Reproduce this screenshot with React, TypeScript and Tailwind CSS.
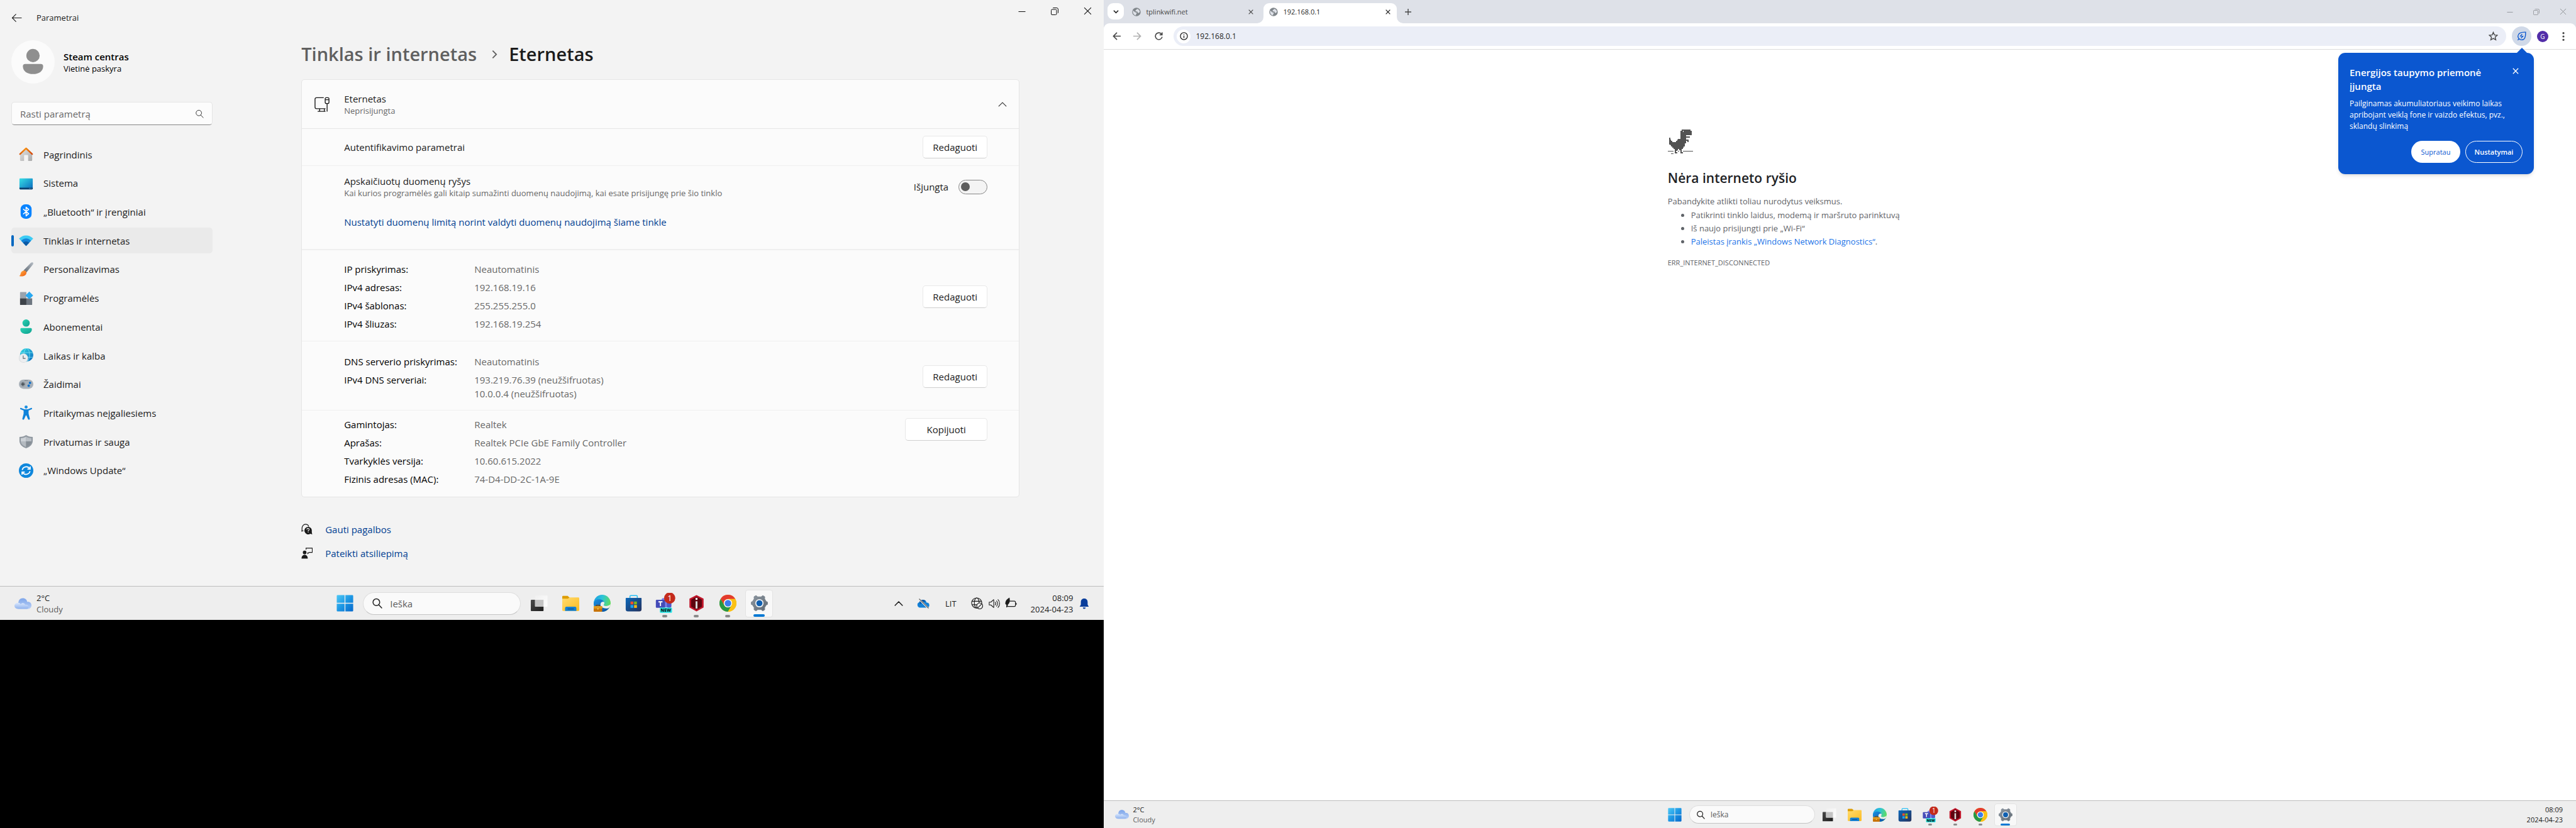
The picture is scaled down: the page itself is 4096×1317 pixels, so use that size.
import type { ReactNode } from "react";

type IconProps = { className?: string };

/* ---------- Settings navigation icons ---------- */

const HomeIcon = ({ className }: IconProps) => (
  <svg viewBox="0 0 25 25" className={className} aria-hidden="true">
    <defs>
      <linearGradient id="homeWall" x1="0" y1="0" x2="1" y2="1">
        <stop offset="0" stopColor="#e4e4e4" />
        <stop offset="1" stopColor="#a9a9a9" />
      </linearGradient>
      <linearGradient id="homeRoof" gradientUnits="userSpaceOnUse" x1="1" y1="0" x2="24" y2="0">
        <stop offset="0" stopColor="#d9580a" />
        <stop offset="0.450" stopColor="#f59015" />
        <stop offset="1" stopColor="#d23f06" />
      </linearGradient>
    </defs>
    <path d="M2 10 12.500 2.500 23 10V22.500a1.500 1.500 0 0 1-1.500 1.500H16V14.500a1 1 0 0 0-1-1H10a1 1 0 0 0-1 1V24H3.500A1.500 1.500 0 0 1 2 22.500Z" fill="url(#homeWall)" />
    <path d="M2 12 12.500 2.200 23 12" fill="none" stroke="url(#homeRoof)" strokeWidth="2.700" strokeLinecap="round" strokeLinejoin="round" />
  </svg>
);

const SystemIcon = ({ className }: IconProps) => (
  <svg viewBox="0 0 25 25" className={className} aria-hidden="true">
    <defs>
      <linearGradient id="sysScreen" x1="0" y1="0" x2="1" y2="1">
        <stop offset="0" stopColor="#36dfe6" />
        <stop offset="1" stopColor="#0a68bd" />
      </linearGradient>
    </defs>
    <rect x="1" y="4" width="23" height="19" rx="1.200" fill="url(#sysScreen)" />
    <path d="M1 20H24v1.800A1.200 1.200 0 0 1 22.800 23H2.200A1.200 1.200 0 0 1 1 21.800Z" fill="#0b3f6e" />
    <circle cx="18.500" cy="21.500" r="0.600" fill="#8fd8ef" />
    <circle cx="21" cy="21.500" r="0.600" fill="#8fd8ef" />
  </svg>
);

const BluetoothIcon = ({ className }: IconProps) => (
  <svg viewBox="0 0 25 25" className={className} aria-hidden="true">
    <rect x="3" y="0" width="19" height="25" rx="8" fill="#0a84ff" />
    <path d="M8 8.500 17 16.200 12.500 20V5L17 8.800 8 16.500" fill="none" stroke="#fff" strokeWidth="1.700" strokeLinejoin="round" strokeLinecap="round" />
  </svg>
);

const WifiIcon = ({ className }: IconProps) => (
  <svg viewBox="0 0 25 25" className={className} aria-hidden="true">
    <path d="M12.500 22 0.300 9.300C3.500 5.600 7.800 3.700 12.500 3.700S21.500 5.600 24.700 9.300Z" fill="#3ccbf4" />
    <path d="M12.500 22 4 13.100C6.300 10.600 9.200 9.100 12.500 9.100S18.700 10.600 21 13.100Z" fill="#1382d8" />
    <path d="M12.500 22 7.200 16.500C8.700 14.900 10.500 14 12.500 14S16.300 14.900 17.800 16.500Z" fill="#0c59a4" />
  </svg>
);

const BrushIcon = ({ className }: IconProps) => (
  <svg viewBox="0 0 25 25" className={className} aria-hidden="true">
    <defs>
      <linearGradient id="brushHandle" x1="0" y1="1" x2="1" y2="0">
        <stop offset="0" stopColor="#5c6670" />
        <stop offset="1" stopColor="#b7bec6" />
      </linearGradient>
      <linearGradient id="brushTip" x1="0" y1="0" x2="1" y2="1">
        <stop offset="0" stopColor="#ffb44a" />
        <stop offset="1" stopColor="#ef5a0c" />
      </linearGradient>
    </defs>
    <path d="M8 14.500 20.500 1.300C21.700 0.200 23.600 0 24.500 0.700 25.200 1.600 25 3 24.200 4.200L12.500 18.500Z" fill="url(#brushHandle)" />
    <path d="M7.700 14.600c2.800-1.200 6 1.200 5.300 4.700-.9 4.300-6.500 6.300-12.500 4.700 2-.8 2-2.200 2.700-4.900.6-2.300 2.200-3.700 4.500-4.500Z" fill="url(#brushTip)" />
  </svg>
);

const AppsIcon = ({ className }: IconProps) => (
  <svg viewBox="0 0 25 25" className={className} aria-hidden="true">
    <path d="M3 1.500H13V12.500H2V2.500a1 1 0 0 1 1-1Z" fill="#9aa3ad" />
    <path d="M2 12.500H13V24H3a1 1 0 0 1-1-1Z" fill="#3d4349" />
    <path d="M13 12.500H23V23a1 1 0 0 1-1 1H13Z" fill="#6e7781" />
    <path d="M18 0.800 24.700 7.500 18 14.200 11.300 7.500Z" fill="#28a8f0" />
  </svg>
);

const AccountsIcon = ({ className }: IconProps) => (
  <svg viewBox="0 0 25 25" className={className} aria-hidden="true">
    <defs>
      <linearGradient id="acct" x1="0" y1="0" x2="1" y2="1">
        <stop offset="0" stopColor="#2bd4b4" />
        <stop offset="1" stopColor="#0f9f8f" />
      </linearGradient>
    </defs>
    <circle cx="12.500" cy="6.300" r="6.300" fill="url(#acct)" />
    <path d="M4.500 15H20.500A2 2 0 0 1 22.500 17C22.500 21.500 18.500 25 12.500 25S2.500 21.500 2.500 17A2 2 0 0 1 4.500 15Z" fill="url(#acct)" />
  </svg>
);

const TimeIcon = ({ className }: IconProps) => (
  <svg viewBox="0 0 25 25" className={className} aria-hidden="true">
    <defs>
      <linearGradient id="timeGlobe" x1="0" y1="0" x2="1" y2="1">
        <stop offset="0" stopColor="#35dbe2" />
        <stop offset="1" stopColor="#0a66c0" />
      </linearGradient>
    </defs>
    <circle cx="13.500" cy="11.500" r="11.500" fill="url(#timeGlobe)" />
    <g fill="none" stroke="#7fe6f2" strokeWidth="0.900">
      <ellipse cx="13.500" cy="11.500" rx="5" ry="11.300" />
      <path d="M3 7.500H24M3 15.500H24" />
    </g>
    <circle cx="8" cy="17" r="8" fill="#d3d7da" />
    <circle cx="8" cy="17" r="7.200" fill="#eceef0" />
    <path d="M7.500 12.500V17.500H11.500" fill="none" stroke="#5c6670" strokeWidth="1.200" />
  </svg>
);

const GamepadIcon = ({ className }: IconProps) => (
  <svg viewBox="0 0 25 25" className={className} aria-hidden="true">
    <rect x="0" y="4" width="25" height="16" rx="8" fill="#a9b1b9" />
    <circle cx="7" cy="12" r="4.300" fill="#929ba3" />
    <path d="M7 9V15M4 12H10" stroke="#3f464d" strokeWidth="1.500" />
    <circle cx="19.200" cy="9.700" r="2.100" fill="#0b6fcb" />
    <circle cx="17" cy="14.700" r="2.100" fill="#0b6fcb" />
    <circle cx="11" cy="5.800" r="0.700" fill="#3f464d" />
    <circle cx="14" cy="5.800" r="0.700" fill="#3f464d" />
  </svg>
);

const AccessIcon = ({ className }: IconProps) => (
  <svg viewBox="0 0 25 25" className={className} aria-hidden="true">
    <circle cx="12.500" cy="2.700" r="2.700" fill="#1a8fe0" />
    <path d="M3.500 4.200 9.500 6.400H15.500L21.500 4.200C23 4 23.300 6 22 6.600L16.800 8.800V14L19 22.700C19 24.600 17 25.200 16 23.800L13 17H12L9 23.800C8 25.200 6 24.600 6 22.700L8.200 14V8.800L3 6.600C1.700 6 2 4 3.500 4.200Z" fill="#0f83da" />
  </svg>
);

const ShieldIcon = ({ className }: IconProps) => (
  <svg viewBox="0 0 25 25" className={className} aria-hidden="true">
    <path d="M12.500 1C15.500 3 19.500 4.200 24 4.300V11C24 17 20 21.500 12.500 24 5 21.500 1 17 1 11V4.300C5.500 4.200 9.500 3 12.500 1Z" fill="#9098a0" />
    <path d="M12.500 3.700C9.700 5.300 7 6.200 3.300 6.500V12H12.500Z" fill="#ccd1d6" />
    <path d="M12.500 3.700C15.300 5.300 18 6.200 21.700 6.500V12H12.500Z" fill="#b9bfc5" />
    <path d="M3.300 12H12.500V21.700C7 19.600 3.600 16.500 3.300 12Z" fill="#b4bac0" />
    <path d="M21.700 12H12.500V21.700C18 19.600 21.400 16.500 21.700 12Z" fill="#868e96" />
  </svg>
);

const UpdateIcon = ({ className }: IconProps) => (
  <svg viewBox="0 0 25 25" className={className} aria-hidden="true">
    <circle cx="12.500" cy="12.500" r="12.500" fill="#0f87dc" />
    <g fill="none" stroke="#fff" strokeWidth="1.900">
      <path d="M5.800 11.500A7 7 0 0 1 18.600 9.200" />
      <path d="M19.200 13.500A7 7 0 0 1 6.400 15.800" />
      <path d="M19.500 5.300V10H14.800" />
      <path d="M5.500 19.700V15H10.200" />
    </g>
  </svg>
);

/* ---------- Small line icons ---------- */

const MagnifierIcon = ({ className }: IconProps) => (
  <svg viewBox="0 0 16 16" className={className} fill="none" stroke="currentColor" aria-hidden="true">
    <circle cx="7" cy="6.500" r="5" />
    <path d="M10.600 10.300 15 15" strokeLinecap="round" />
  </svg>
);

const MinimizeIcon = ({ className }: IconProps) => (
  <svg viewBox="0 0 12 12" className={className} fill="none" stroke="currentColor" aria-hidden="true">
    <path d="M0.500 6.500H11.500" />
  </svg>
);

const RestoreIcon = ({ className }: IconProps) => (
  <svg viewBox="0 0 12 12" className={className} fill="none" stroke="currentColor" aria-hidden="true">
    <rect x="0.500" y="3" width="8.500" height="8.500" rx="1.500" />
    <path d="M3 1C3.300 0.600 3.600 0.500 4 0.500H9A2.500 2.500 0 0 1 11.500 3V8C11.500 8.400 11.400 8.700 11 9" />
  </svg>
);

const CrossIcon = ({ className }: IconProps) => (
  <svg viewBox="0 0 12 12" className={className} fill="none" stroke="currentColor" aria-hidden="true">
    <path d="M1 1 11 11M11 1 1 11" />
  </svg>
);

const EthernetIcon = ({ className }: IconProps) => (
  <svg viewBox="0 0 26 26" className={className} fill="none" stroke="currentColor" strokeWidth="1.500" aria-hidden="true">
    <path d="M16 1.500H3.500A2.500 2.500 0 0 0 1 4V18A2.500 2.500 0 0 0 3.500 20.500H19" />
    <path d="M9 20.500V25M17 20.500V25M5.500 25H19" />
    <rect x="18.500" y="1.500" width="6.500" height="10" rx="2" />
    <path d="M18.500 5H25M21.800 11.500V25.500" />
  </svg>
);

const HelpIcon = ({ className }: IconProps) => (
  <svg viewBox="0 0 20 20" className={className} aria-hidden="true">
    <path d="M1 14C1.500 12.500 1.500 11 1.300 8.500 1.300 4 4 1 7.500 1 10.500 1 12.500 2.500 13.200 5" fill="none" stroke="#1a1a1a" strokeWidth="1.300" />
    <path d="M0.500 12.500H4" stroke="#1a1a1a" strokeWidth="1.200" />
    <path d="M12 5.500C15.800 5.500 18.700 8.400 18.700 12 18.700 13.500 18.300 14.800 19.500 19L16 17.800A6.700 6.700 0 1 1 12 5.500Z" fill="#1a1a1a" />
    <path d="M10 10.500A2 2 0 1 1 12.300 12.200V13.200M12.300 14.300V15.500" fill="none" stroke="#f3f3f3" strokeWidth="1.300" />
  </svg>
);

const FeedbackIcon = ({ className }: IconProps) => (
  <svg viewBox="0 0 20 20" className={className} aria-hidden="true">
    <circle cx="6" cy="8.500" r="3.200" fill="#1a1a1a" />
    <path d="M0.500 19.500C0.500 15.500 2.500 12.800 6 12.800S11.500 15.500 11.500 19.500Z" fill="#1a1a1a" />
    <path d="M8.500 3.500V1H19.500V8.500H14L11.500 10.500V8.500" fill="none" stroke="#1a1a1a" strokeWidth="1.300" />
  </svg>
);

const GlobeSolidIcon = ({ className }: IconProps) => (
  <svg viewBox="0 0 16 16" className={className} aria-hidden="true">
    <circle cx="8" cy="8" r="7.700" fill="#80868b" />
    <path d="M2.200 5.500 5.500 8.500 8 9C9 9.500 8.500 11 7.500 11.500L7 14.200C4 13.800 1.800 11.500 1.700 8.500 1.700 7.300 1.800 6.500 2.200 5.500Z" fill="#dee1e8" />
    <path d="M6.500 4.500C7.500 4.500 8.500 4 9 2.200 12 3 14 5 14.200 8L12 10 10.500 9.500 9.500 7.200H6.500Z" fill="#dee1e8" />
  </svg>
);

/* ---------- Taskbar icons ---------- */

const StartIcon = ({ className }: IconProps) => (
  <svg viewBox="0 0 30 30" className={className} aria-hidden="true">
    <defs>
      <linearGradient id="startBlue" gradientUnits="userSpaceOnUse" x1="0" y1="0" x2="30" y2="30">
        <stop offset="0" stopColor="#4fcaf6" />
        <stop offset="0.500" stopColor="#1d97e4" />
        <stop offset="1" stopColor="#0667cb" />
      </linearGradient>
    </defs>
    <path d="M2 0.500H14.300V14.300H0.500V2A1.500 1.500 0 0 1 2 0.500ZM15.700 0.500H28A1.500 1.500 0 0 1 29.500 2V14.300H15.700ZM0.500 15.700H14.300V29.500H2A1.500 1.500 0 0 1 0.500 28ZM15.700 15.700H29.500V28A1.500 1.500 0 0 1 28 29.500H15.700Z" fill="url(#startBlue)" />
  </svg>
);

const TaskViewIcon = ({ className }: IconProps) => (
  <svg viewBox="0 0 30 30" className={className} aria-hidden="true">
    <defs>
      <linearGradient id="tvDark" x1="0" y1="0" x2="1" y2="1">
        <stop offset="0" stopColor="#4a4a4a" />
        <stop offset="1" stopColor="#1c1c1c" />
      </linearGradient>
      <linearGradient id="tvLight" x1="0" y1="0" x2="1" y2="1">
        <stop offset="0" stopColor="#f0f0f0" />
        <stop offset="1" stopColor="#fdfdfd" />
      </linearGradient>
    </defs>
    <rect x="0" y="9" width="22.500" height="20" rx="1.200" fill="url(#tvDark)" />
    <rect x="7.500" y="1" width="22" height="20" rx="1" fill="url(#tvLight)" />
    <rect x="7.500" y="9" width="15" height="12" fill="#c3c3c3" />
  </svg>
);

const ExplorerIcon = ({ className }: IconProps) => (
  <svg viewBox="0 0 30 30" className={className} aria-hidden="true">
    <defs>
      <linearGradient id="folder" x1="0" y1="0" x2="1" y2="1">
        <stop offset="0" stopColor="#ffdb6e" />
        <stop offset="1" stopColor="#fcbc22" />
      </linearGradient>
    </defs>
    <path d="M0 3.500A1.500 1.500 0 0 1 1.500 2H9.500L13 5V10H0Z" fill="#dd9d05" />
    <path d="M0 7H10L13 4.800H28.500A1.500 1.500 0 0 1 30 6.300V27A1.500 1.500 0 0 1 28.500 28.500H1.500A1.500 1.500 0 0 1 0 27Z" fill="url(#folder)" />
    <path d="M5 28.500V23.500A2.500 2.500 0 0 1 7.500 21H22.500A2.500 2.500 0 0 1 25 23.500V28.500Z" fill="#1480d2" />
    <path d="M10 25.200H20" stroke="#0b4f8c" strokeWidth="1.400" strokeLinecap="round" />
  </svg>
);

const EdgeIcon = ({ className }: IconProps) => (
  <svg viewBox="0 0 30 30" className={className} aria-hidden="true">
    <defs>
      <linearGradient id="edgeTop" x1="0" y1="0.200" x2="1" y2="0.500">
        <stop offset="0" stopColor="#1d9fe0" />
        <stop offset="0.450" stopColor="#2cc3d8" />
        <stop offset="1" stopColor="#62de5b" />
      </linearGradient>
      <linearGradient id="edgeLow" x1="0" y1="0" x2="1" y2="1">
        <stop offset="0" stopColor="#1a8fe0" />
        <stop offset="1" stopColor="#0c4ea3" />
      </linearGradient>
    </defs>
    <circle cx="15" cy="15" r="15" fill="url(#edgeTop)" />
    <path d="M0 15C1 10 5 8 9.500 8 14 8 17.500 10 18.500 13 15 11.500 12 13.500 12 17 12 21 16 24 20.500 24 23.500 24 25.500 23 27.500 22.500 25 27 20.500 30 15 30 6.700 30 0 23.300 0 15Z" fill="url(#edgeLow)" />
    <path d="M18.500 13C19.300 15 18.600 16.500 17.700 17.700 17 18.700 18.500 20 22 20 26.500 20 29 18 29.900 16.500 29.700 19 29 21 27.500 22.500 25.500 24 23.500 24.500 20.500 24 15.500 23.500 12 20.500 12 17 12 13.500 15.500 11.500 18.500 13Z" fill="#ededed" />
    <rect x="0" y="20" width="15" height="10" rx="1.200" fill="#c87409" />
    <path d="M0 21.200A1.200 1.200 0 0 1 1.200 20H13.800A1.200 1.200 0 0 1 15 21.200V24.500H0Z" fill="#e19a1c" />
    <path d="M4.500 20V18.500H10.500V20" fill="none" stroke="#7a4304" strokeWidth="1.300" />
    <circle cx="7.500" cy="25" r="1.100" fill="#ffd35c" />
  </svg>
);

const StoreIcon = ({ className }: IconProps) => (
  <svg viewBox="0 0 30 30" className={className} aria-hidden="true">
    <defs>
      <linearGradient id="storeBag" x1="0" y1="0" x2="1" y2="1">
        <stop offset="0" stopColor="#0c69bb" />
        <stop offset="1" stopColor="#23305c" />
      </linearGradient>
    </defs>
    <path d="M8.500 6V3A1.500 1.500 0 0 1 10 1.500H20A1.500 1.500 0 0 1 21.500 3V6" fill="none" stroke="#27c0f5" strokeWidth="1.700" />
    <path d="M2 5.500H28A1 1 0 0 1 29 6.500V25.500A4 4 0 0 1 25 29.500H5A4 4 0 0 1 1 25.500V6.500A1 1 0 0 1 2 5.500Z" fill="url(#storeBag)" />
    <path d="M9.500 12H14.500V17H9.500Z" fill="#f0502a" />
    <path d="M15.800 12H20.800V17H15.800Z" fill="#80ba18" />
    <path d="M9.500 18.200H14.500V23.200H9.500Z" fill="#1ba3ee" />
    <path d="M15.800 18.200H20.800V23.200H15.800Z" fill="#fdb913" />
  </svg>
);

const TeamsIcon = ({ className }: IconProps) => (
  <svg viewBox="0 0 36 36" className={className} aria-hidden="true">
    <rect x="12" y="9" width="16" height="16" rx="3" fill="#7b83eb" />
    <rect x="21" y="14" width="8" height="12" rx="3" fill="#5059c9" />
    <rect x="2" y="12" width="16" height="14" rx="1.500" fill="#444bb8" />
    <path d="M6.500 15.500H13.500M10 15.500V23" stroke="#fff" strokeWidth="2" />
    <rect x="9" y="25.500" width="21" height="9" rx="1.500" fill="#28e3e3" />
    <text x="19.500" y="32.700" textAnchor="middle" fontFamily="Open Sans, sans-serif" fontWeight="800" fontSize="7.500" fill="#0b1b1b">NEW</text>
    <circle cx="26" cy="9" r="9.700" fill="#c42b1c" />
    <text x="26" y="14" textAnchor="middle" fontFamily="Open Sans, sans-serif" fontSize="14" fill="#fff">1</text>
  </svg>
);

const RedGemIcon = ({ className }: IconProps) => (
  <svg viewBox="0 0 30 30" className={className} aria-hidden="true">
    <path d="M15 0.500 27.500 7V22.500L15 29.500 2.500 22.500V7Z" fill="#c0152a" />
    <path d="M15 3.500 24.500 8.700V21L15 26.500 5.500 21V8.700Z" fill="#5e0410" />
    <path d="M13.300 11.500H16.700V24.500H13.300Z" fill="#d9d9d9" />
    <path d="M13.300 5.500H16.700V9H13.300Z" fill="#fff" />
  </svg>
);

const ChromeIcon = ({ className }: IconProps) => (
  <svg viewBox="0 0 30 30" className={className} aria-hidden="true">
    <circle cx="15" cy="15" r="15" fill="#fbc116" />
    <path d="M2 7.500A15 15 0 0 1 28 7.500H15A7.500 7.500 0 0 0 8.500 18.700Z" fill="#e33b2e" />
    <path d="M2 7.500 8.500 18.700A7.500 7.500 0 0 0 15 22.500L21.500 18.700 15 30A15 15 0 0 1 2 7.500Z" fill="#269846" />
    <path d="M28 7.500A15 15 0 0 1 15 30L21.500 18.800A7.500 7.500 0 0 0 15 7.500Z" fill="#fbc116" />
    <circle cx="15" cy="15" r="7.300" fill="#fff" />
    <circle cx="15" cy="15" r="5.800" fill="#3b7ded" />
  </svg>
);

const GearIcon = ({ className }: IconProps) => (
  <svg viewBox="0 0 30 30" className={className} aria-hidden="true">
    <defs>
      <linearGradient id="gearGrey" x1="0" y1="0" x2="1" y2="1">
        <stop offset="0" stopColor="#8f99a3" />
        <stop offset="1" stopColor="#5e6872" />
      </linearGradient>
    </defs>
    <g fill="url(#gearGrey)" stroke="#79838d" strokeLinejoin="round">
      <path d="M9 1.500 12 3.700H18L21 1.500 24.500 3.500 24.300 7.200 27 11.800 29.500 13V17L27 18.200 24.300 22.800 24.500 26.500 21 28.500 18 26.300H12L9 28.500 5.500 26.500 5.700 22.800 3 18.200 0.500 17V13L3 11.800 5.700 7.200 5.500 3.500Z" />
    </g>
    <circle cx="15" cy="15" r="7.300" fill="#f0f2f4" />
    <circle cx="15" cy="15" r="5.400" fill="#0f5fb0" />
  </svg>
);

const CloudyIcon = ({ className }: IconProps) => (
  <svg viewBox="0 0 30 20" className={className} aria-hidden="true">
    <defs>
      <linearGradient id="cloudBack" x1="0" y1="0" x2="0" y2="1">
        <stop offset="0" stopColor="#7ea6ea" />
        <stop offset="1" stopColor="#b9d0f7" />
      </linearGradient>
      <linearGradient id="cloudFront" x1="0" y1="0" x2="0" y2="1">
        <stop offset="0" stopColor="#dbe8fc" />
        <stop offset="1" stopColor="#8fb2ee" />
      </linearGradient>
    </defs>
    <path d="M7 12C6 5 9.500 0.500 14.500 0.500S22 3.500 22.500 7C27 6 30 9 30 13S27 19.500 24 19.500H7Z" fill="url(#cloudBack)" />
    <path d="M6 19.500C2.500 19.500 0 17 0 14S2.500 8.500 6 8.500C8.500 8.500 10 9.500 11 11 13 8.500 17.500 8.500 19 12 23 11.500 25 13.500 25 16S23 19.500 20.500 19.500Z" fill="url(#cloudFront)" />
  </svg>
);

const TrayCloudIcon = ({ className }: IconProps) => (
  <svg viewBox="0 0 20 16" className={className} aria-hidden="true">
    <path d="M5 14.500A4.500 4.500 0 0 1 4 5.700 6 6 0 0 1 15.300 6.500 4 4 0 0 1 16 14.500Z" fill="#1380d6" />
    <path d="M4 5.700A6 6 0 0 1 14 4L5 9Z" fill="#0a56a6" />
    <path d="M3 0.500 18 15.500" stroke="#ededed" strokeWidth="2.600" />
    <path d="M3.500 0.500 18.500 15.500" stroke="#5b5b5b" strokeWidth="1.100" />
  </svg>
);

const TrayGlobeIcon = ({ className }: IconProps) => (
  <svg viewBox="0 0 20 20" className={className} fill="none" stroke="#1c1c1c" strokeWidth="1.200" aria-hidden="true">
    <circle cx="9.500" cy="9.500" r="8.500" />
    <ellipse cx="9.500" cy="9.500" rx="4" ry="8.500" />
    <path d="M1.500 6.700H17.500M1.500 12.500H17.500" />
    <circle cx="14.500" cy="14.500" r="5" fill="#ededed" />
    <path d="M11.200 17.800 17.800 11.200" />
  </svg>
);

const TraySpeakerIcon = ({ className }: IconProps) => (
  <svg viewBox="0 0 20 20" className={className} fill="none" stroke="#1c1c1c" strokeWidth="1.200" strokeLinecap="round" strokeLinejoin="round" aria-hidden="true">
    <path d="M1 7.500V12.500H4L9 17V3L4 7.500Z" />
    <path d="M11.500 7.500A4 4 0 0 1 11.500 12.500M14 5.300A7 7 0 0 1 14 14.700M16.500 3A10 10 0 0 1 16.500 17" />
  </svg>
);

const TrayBatteryIcon = ({ className }: IconProps) => (
  <svg viewBox="0 0 20 20" className={className} aria-hidden="true">
    <rect x="3.500" y="6.500" width="14" height="9" rx="2" fill="none" stroke="#1c1c1c" strokeWidth="1.300" />
    <path d="M18.300 9.500H19.500V12.500H18.300Z" fill="#1c1c1c" />
    <path d="M0.500 11C0.500 6 3 3 7.500 0.500 8.500 5 8.500 9.500 5 12L3.500 17 2 16.500 2.500 13Z" fill="#1c1c1c" />
  </svg>
);

const BellIcon = ({ className }: IconProps) => (
  <svg viewBox="0 0 20 20" className={className} aria-hidden="true">
    <path d="M10 1C14 1 16 4 16 7.500V12L18 15.500H2L4 12V7.500C4 4 6 1 10 1ZM7.500 17H12.500A2.500 2.500 0 0 1 7.500 17Z" fill="#0a3e9b" />
  </svg>
);

const ChevronUpIcon = ({ className }: IconProps) => (
  <svg viewBox="0 0 12 12" className={className} fill="none" stroke="currentColor" aria-hidden="true">
    <path d="M1 8.500 6 3.500 11 8.500" strokeLinecap="round" strokeLinejoin="round" />
  </svg>
);

/* ---------- Dinosaur drawn on a 2px grid ---------- */

const DINO_ROWS = [
  "............########..",
  "...........##.#######.",
  "...........##########.",
  "...........##########.",
  "...........##########.",
  "...........#####......",
  "...........########...",
  ".#.........#####......",
  ".#.......#######......",
  ".##.....##########....",
  ".###...#########.#....",
  ".###############......",
  ".##############.......",
  "..#############.......",
  "...############.......",
  "....##########........",
  ".....########.........",
  "......###.##..........",
  "......##...#..........",
  "......#....#..........",
  "......##...##.........",
];

const DinoIcon = ({ className }: IconProps) => (
  <svg viewBox="0 0 44 43" className={className} shapeRendering="crispEdges" fill="#535353" aria-hidden="true">
    {DINO_ROWS.flatMap((row, y) =>
      Array.from(row.matchAll(/#+/g)).map((run) => (
        <rect key={`${y}-${run.index}`} x={run.index * 2} y={y * 2} width={run[0].length * 2} height="2" />
      )),
    )}
    <rect x="0" y="38" width="10" height="1" />
    <rect x="26" y="38" width="18" height="1" />
    <rect x="18" y="38" width="2" height="1" />
    <rect x="6" y="42" width="4" height="1" />
  </svg>
);

/* ---------- Settings window ---------- */

const NAV = [
  { label: "Pagrindinis", Icon: HomeIcon },
  { label: "Sistema", Icon: SystemIcon },
  { label: "„Bluetooth“ ir įrenginiai", Icon: BluetoothIcon },
  { label: "Tinklas ir internetas", Icon: WifiIcon, active: true },
  { label: "Personalizavimas", Icon: BrushIcon },
  { label: "Programėlės", Icon: AppsIcon },
  { label: "Abonementai", Icon: AccountsIcon },
  { label: "Laikas ir kalba", Icon: TimeIcon },
  { label: "Žaidimai", Icon: GamepadIcon },
  { label: "Pritaikymas neįgaliesiems", Icon: AccessIcon },
  { label: "Privatumas ir sauga", Icon: ShieldIcon },
  { label: "„Windows Update“", Icon: UpdateIcon },
];

const Sidebar = () => (
  <aside className="w-[345px] shrink-0 pl-[18px] pr-[7px] pt-2">
    <div className="flex items-center gap-[14px]">
      <svg viewBox="0 0 75 75" className="size-[69px]" aria-hidden="true">
        <circle cx="37.500" cy="37.500" r="37.500" fill="#fbfbfb" />
        <circle cx="37.500" cy="26.500" r="11.500" fill="#8f8f8f" />
        <path d="M24 41H51A4 4 0 0 1 55 45C55 53.500 47.500 58.500 37.500 58.500S20 53.500 20 45A4 4 0 0 1 24 41Z" fill="#8f8f8f" />
      </svg>
      <div className="text-black">
        <p className="text-[15px] leading-5 font-semibold">Steam centras</p>
        <p className="text-[13px] leading-[18px]">Vietinė paskyra</p>
      </div>
    </div>
    <div className="mt-[29px] flex h-[37px] items-center rounded-[5px] border border-[#e5e5e5] border-b-[#868686] bg-[#fcfcfc] px-[13px]">
      <input
        type="text"
        aria-label="Rasti parametrą"
        placeholder="Rasti parametrą"
        className="min-w-0 flex-1 bg-transparent text-[15px] leading-5 outline-none placeholder:text-[#686868]"
      />
      <MagnifierIcon className="size-[14px] text-[#1f1f1f]" />
    </div>
    <nav className="mt-[26px] flex h-[544px] flex-col justify-between">
      {NAV.map(({ label, Icon, active }) => (
        <a
          key={label}
          href="#"
          className={`relative flex h-[41px] items-center gap-4 rounded-[5px] pl-3 text-[15px] leading-5 text-[#1b1b1b] ${active ? "bg-[#eaeaea]" : ""}`}
        >
          {active && <span className="absolute left-0 h-[18px] w-1 rounded-full bg-[#0067c0]" />}
          <Icon className="size-[23px]" />
          {label}
        </a>
      ))}
    </nav>
  </aside>
);

const ActionButton = ({ children, className = "" }: { children: ReactNode; className?: string }) => (
  <button
    type="button"
    className={`h-9 shrink-0 rounded-[5px] border border-[#e8e8e8] border-b-[#cfcfcf] bg-white text-[15px] leading-5 text-[#1b1b1b] ${className}`}
  >
    {children}
  </button>
);

const Details = ({ items }: { items: [string, string[]][] }) => (
  <dl className="grid grid-cols-[207px_auto] text-[15px]">
    {items.map(([term, values]) => (
      <div key={term} className="contents">
        <dt className="leading-[29px] text-black">{term}</dt>
        <dd className="py-[3px] text-[#686868]">
          {values.map((v) => (
            <p key={v} className="leading-[22px]">{v}</p>
          ))}
        </dd>
      </div>
    ))}
  </dl>
);

const SettingsWindow = () => (
  <section className="bg-[#f3f3f3] pb-[33px]">
    <header className="flex h-14 items-start justify-between">
      <div className="flex h-14 items-center gap-[23px] pl-[18px]">
        <button type="button" aria-label="Atgal" className="grid size-[17px] place-items-center text-[#1b1b1b]">
          <svg viewBox="0 0 18 16" className="h-[15px] w-[17px]" fill="none" stroke="currentColor" strokeWidth="1.200" aria-hidden="true">
            <path d="M8 1.500 1.500 8 8 14.500M1.500 8H17.500" />
          </svg>
        </button>
        <p className="text-[13px] leading-[18px] text-[#1b1b1b]">Parametrai</p>
      </div>
      <div className="flex text-[#111]">
        <button type="button" aria-label="Sumažinti" className="grid h-[35px] w-[52px] place-items-center"><MinimizeIcon className="size-[12px]" /></button>
        <button type="button" aria-label="Atkurti" className="grid h-[35px] w-[52px] place-items-center"><RestoreIcon className="size-[12px]" /></button>
        <button type="button" aria-label="Uždaryti" className="grid h-[35px] w-[52px] place-items-center"><CrossIcon className="size-[13px]" /></button>
      </div>
    </header>
    <div className="flex">
      <Sidebar />
      <main className="min-w-0 flex-1 pt-[10px]">
        <div className="mx-auto max-w-[1142px]">
          <h1 className="flex items-center text-[29px] leading-10 font-semibold">
            <a href="#" className="text-[#5f5f5f]">Tinklas ir internetas</a>
            <svg viewBox="0 0 10 16" className="ml-6 mr-[18px] h-[15px] w-[9px]" fill="none" stroke="#5f5f5f" strokeWidth="2" aria-hidden="true">
              <path d="M1.500 1.500 8 8 1.500 14.500" />
            </svg>
            <span className="text-[#1b1b1b]">Eternetas</span>
          </h1>
          <div className="mt-5 rounded-[5px] border border-[#e5e5e5] bg-[#fbfbfb]">
            <div className="flex h-[78px] items-center border-b border-[#e5e5e5] pl-5 pr-[19px]">
              <EthernetIcon className="size-6 text-[#1b1b1b]" />
              <div className="ml-[23px] flex-1">
                <p className="text-[15px] leading-5 text-[#1b1b1b]">Eternetas</p>
                <p className="text-[13px] leading-[18px] text-[#686868]">Neprisijungta</p>
              </div>
              <button type="button" aria-label="Sutraukti"><ChevronUpIcon className="size-[14px] text-[#333]" /></button>
            </div>
            <div className="flex h-[59px] items-center justify-between border-b border-[#efefef] pl-[67px] pr-[50px]">
              <p className="text-[15px] leading-5 text-[#1b1b1b]">Autentifikavimo parametrai</p>
              <ActionButton className="w-[103px]">Redaguoti</ActionButton>
            </div>
            <div className="border-b-2 border-[#efefef] pb-[33px] pl-[67px] pr-[50px] pt-[14px]">
              <div className="flex items-center justify-between">
                <div>
                  <p className="text-[15px] leading-5 text-[#1b1b1b]">Apskaičiuotų duomenų ryšys</p>
                  <p className="text-[13px] leading-[18px] text-[#686868]">
                    Kai kurios programėlės gali kitaip sumažinti duomenų naudojimą, kai esate prisijungę prie šio tinklo
                  </p>
                </div>
                <label className="flex items-center gap-4 text-[15px] leading-5 text-[#1b1b1b]">
                  Išjungta
                  <input
                    type="checkbox"
                    role="switch"
                    className="flex h-[23px] w-[46px] appearance-none items-center rounded-full border border-[#868686] bg-[#f4f4f4] pl-[3px] before:size-[14px] before:rounded-full before:bg-[#5d5d5d] checked:bg-[#0067c0]"
                  />
                </label>
              </div>
              <a href="#" className="mt-[27px] block w-fit text-[15px] leading-5 text-[#003e92]">
                Nustatyti duomenų limitą norint valdyti duomenų naudojimą šiame tinkle
              </a>
            </div>
            <div className="flex items-start justify-between border-b border-[#efefef] pb-3 pl-[67px] pr-[50px] pt-4">
              <Details
                items={[
                  ["IP priskyrimas:", ["Neautomatinis"]],
                  ["IPv4 adresas:", ["192.168.19.16"]],
                  ["IPv4 šablonas:", ["255.255.255.0"]],
                  ["IPv4 šliuzas:", ["192.168.19.254"]],
                ]}
              />
              <ActionButton className="mt-10 w-[103px]">Redaguoti</ActionButton>
            </div>
            <div className="flex items-start justify-between border-b border-[#efefef] pb-3 pl-[67px] pr-[50px] pt-[18px]">
              <Details
                items={[
                  ["DNS serverio priskyrimas:", ["Neautomatinis"]],
                  ["IPv4 DNS serveriai:", ["193.219.76.39 (neužšifruotas)", "10.0.0.4 (neužšifruotas)"]],
                ]}
              />
              <ActionButton className="mt-5 w-[103px]">Redaguoti</ActionButton>
            </div>
            <div className="flex items-start justify-between pb-[13px] pl-[67px] pr-[50px] pt-2">
              <Details
                items={[
                  ["Gamintojas:", ["Realtek"]],
                  ["Aprašas:", ["Realtek PCIe GbE Family Controller"]],
                  ["Tvarkyklės versija:", ["10.60.615.2022"]],
                  ["Fizinis adresas (MAC):", ["74-D4-DD-2C-1A-9E"]],
                ]}
              />
              <ActionButton className="mt-1 w-[131px]">Kopijuoti</ActionButton>
            </div>
          </div>
          <div className="mt-8 text-[15px] text-[#003e92]">
            <a href="#" className="flex h-[38px] w-fit items-center gap-5"><HelpIcon className="size-[18px]" />Gauti pagalbos</a>
            <a href="#" className="flex h-[38px] w-fit items-center gap-5"><FeedbackIcon className="size-[18px]" />Pateikti atsiliepimą</a>
          </div>
        </div>
      </main>
    </div>
  </section>
);

/* ---------- Taskbar ---------- */

const APPS = [
  { name: "Užduočių rodinys", Icon: TaskViewIcon, running: false },
  { name: "Failų naršyklė", Icon: ExplorerIcon, running: false },
  { name: "Edge", Icon: EdgeIcon, running: false },
  { name: "Store", Icon: StoreIcon, running: false },
  { name: "Teams", Icon: TeamsIcon, running: true },
  { name: "Programa", Icon: RedGemIcon, running: true },
  { name: "Chrome", Icon: ChromeIcon, running: true },
];

const SIZES = {
  large: {
    bar: "h-[54px] text-[13px] leading-[18px]",
    side: "pl-[23px] gap-2",
    cloud: "w-[27px]",
    group: "gap-1",
    cell: "size-[50px]",
    icon: "size-[27px]",
    teams: "size-[33px]",
    search: "h-9 w-[251px] pl-[13px] text-[15px] gap-3",
    glass: "size-[17px]",
    dot: "h-1 w-2",
    tile: "h-11 w-11",
    activeDot: "h-1 w-[18px]",
    clock: "pr-[49px]",
  },
  small: {
    bar: "h-11 text-[11px] leading-4",
    side: "pl-[18px] gap-[6px]",
    cloud: "w-[22px]",
    group: "gap-[3px]",
    cell: "size-10",
    icon: "size-[22px]",
    teams: "size-[26px]",
    search: "h-[29px] w-[200px] pl-[10px] text-[12px] gap-[9px]",
    glass: "size-[14px]",
    dot: "h-[3px] w-[6px]",
    tile: "h-9 w-9",
    activeDot: "h-[3px] w-[15px]",
    clock: "pr-[21px]",
  },
};

const Taskbar = ({ size, tray }: { size: "large" | "small"; tray?: boolean }) => {
  const s = SIZES[size];
  return (
    <footer className={`grid grid-cols-[1fr_auto_1fr] items-center border-t border-[#bdbdbd] bg-[#eeeeee] text-[#1b1b1b] ${s.bar}`}>
      <button type="button" className={`flex items-center text-left ${s.side}`}>
        <CloudyIcon className={s.cloud} />
        <span>
          2°C
          <span className="block text-[#5c5c5c]">Cloudy</span>
        </span>
      </button>
      <div className={`flex items-center ${s.group}`}>
        <button type="button" aria-label="Pradžia" className={`grid place-items-center ${s.cell}`}>
          <StartIcon className={s.icon} />
        </button>
        <label className={`flex items-center rounded-full border border-[#dedede] border-b-[#c4c4c4] bg-[#fafafa] ${s.search}`}>
          <MagnifierIcon className={`shrink-0 stroke-[1.4] text-[#1f1f1f] ${s.glass}`} />
          <input type="text" placeholder="Ieška" aria-label="Ieška" className="w-full min-w-0 bg-transparent outline-none placeholder:text-[#5c5c5c]" />
        </label>
        <div className="flex items-center">
          {APPS.map(({ name, Icon, running }) => (
            <button key={name} type="button" aria-label={name} className={`relative grid place-items-center ${s.cell}`}>
              <Icon className={name === "Teams" ? s.teams : s.icon} />
              {running && <span className={`absolute bottom-[3px] rounded-full bg-[#8a8a8a] ${s.dot}`} />}
            </button>
          ))}
          <button type="button" aria-label="Parametrai" className={`grid place-items-center ${s.cell}`}>
            <span className={`relative grid place-items-center rounded-[4px] border border-[#e3e3e3] bg-[#f8f8f8] ${s.tile}`}>
              <GearIcon className={s.icon} />
              <span className={`absolute bottom-0 rounded-full bg-[#0078d4] ${s.activeDot}`} />
            </span>
          </button>
        </div>
      </div>
      <div className="flex items-center justify-end">
        {tray && (
          <div className="mr-[22px] flex items-center">
            <ChevronUpIcon className="mr-[22px] size-[14px] stroke-[1.3]" />
            <TrayCloudIcon className="mr-[25px] w-5" />
            <span className="mr-[23px]">LIT</span>
            <TrayGlobeIcon className="mr-[9px] size-[19px]" />
            <TraySpeakerIcon className="mr-[8px] size-[18px]" />
            <TrayBatteryIcon className="size-[19px]" />
          </div>
        )}
        <div className={`relative text-right ${s.clock}`}>
          <time className="block">08:09</time>
          <time className="block">2024-04-23</time>
          {tray && <BellIcon className="absolute right-[22px] top-[9px] size-[18px]" />}
        </div>
      </div>
    </footer>
  );
};

/* ---------- Browser window ---------- */

const SaverPopup = () => (
  <div role="dialog" aria-label="Energijos taupymo priemonė" className="absolute right-[67px] top-[84px] w-[311px] rounded-[11px] bg-[#0b57d0] px-[18px] pb-[18px] pt-5 text-white shadow-md">
    <svg viewBox="0 0 18 9" className="absolute -top-2 right-[10px] h-[9px] w-[18px]" aria-hidden="true">
      <path d="M0 9 9 0 18 9Z" fill="#0b57d0" />
    </svg>
    <div className="flex items-start justify-between">
      <h2 className="w-[240px] text-[15px] leading-[22px] font-semibold">Energijos taupymo priemonė įjungta</h2>
      <button type="button" aria-label="Uždaryti" className="mr-[6px] mt-1"><CrossIcon className="size-[10px] stroke-[1.6]" /></button>
    </div>
    <p className="mt-2 text-[12px] leading-[18px]">
      Pailginamas akumuliatoriaus veikimo laikas apribojant veiklą fone ir vaizdo efektus, pvz., sklandų slinkimą
    </p>
    <div className="mt-[14px] flex justify-end gap-2 text-[11px] leading-4 font-semibold">
      <button type="button" className="h-[35px] w-[78px] rounded-full bg-white font-medium text-[#0b57d0]">Supratau</button>
      <button type="button" className="h-[35px] w-[91px] rounded-full border border-white">Nustatymai</button>
    </div>
  </div>
);

const Browser = () => (
  <section className="relative flex flex-1 flex-col bg-white">
    <div className="flex h-[37px] bg-[#dee1e8] pl-[6px]">
      <button type="button" aria-label="Ieškoti skirtukų" className="mr-[13px] mt-[5px] grid size-[26px] place-items-center rounded-[9px] bg-white">
        <svg viewBox="0 0 10 10" className="size-[9px]" fill="none" stroke="#1f1f1f" strokeWidth="1.800" aria-hidden="true"><path d="M1 3 5 7 9 3" /></svg>
      </button>
      <div className="mt-[5px] flex w-[209px] items-center pb-1 text-[11px] leading-4 text-[#474747]">
        <GlobeSolidIcon className="mr-2 size-[14px]" />
        <span className="flex-1 font-medium">tplinkwifi.net</span>
        <button type="button" aria-label="Uždaryti skirtuką" className="mr-4"><CrossIcon className="size-2 stroke-[1.8]" /></button>
      </div>
      <div className="relative mt-[5px] flex w-[212px] items-center rounded-t-[9px] bg-white pb-1 pl-[9px] text-[11px] leading-4 text-[#1f1f1f]">
        <svg viewBox="0 0 10 10" className="absolute -left-[10px] bottom-0 size-[10px]" aria-hidden="true"><path d="M10 0V10H0A10 10 0 0 0 10 0Z" fill="#fff" /></svg>
        <svg viewBox="0 0 10 10" className="absolute -right-[10px] bottom-0 size-[10px]" aria-hidden="true"><path d="M0 0V10H10A10 10 0 0 1 0 0Z" fill="#fff" /></svg>
        <GlobeSolidIcon className="mr-2 size-[14px]" />
        <span className="flex-1 font-medium">192.168.0.1</span>
        <button type="button" aria-label="Uždaryti skirtuką" className="mr-[10px]"><CrossIcon className="size-2 stroke-[1.9]" /></button>
      </div>
      <button type="button" aria-label="Naujas skirtukas" className="ml-[13px] text-[#474747]">
        <svg viewBox="0 0 10 10" className="size-[10px]" fill="none" stroke="currentColor" strokeWidth="1.400" aria-hidden="true"><path d="M5 0V10M0 5H10" /></svg>
      </button>
      <div className="ml-auto flex text-[#8a8d92]">
        <button type="button" aria-label="Sumažinti" className="grid h-[37px] w-[42px] place-items-center"><MinimizeIcon className="size-[10px]" /></button>
        <button type="button" aria-label="Atkurti" className="grid h-[37px] w-[42px] place-items-center"><RestoreIcon className="size-[10px]" /></button>
        <button type="button" aria-label="Uždaryti" className="grid h-[37px] w-[42px] place-items-center"><CrossIcon className="size-[11px]" /></button>
      </div>
    </div>
    <div className="bg-[#dee1e8]">
      <div className="flex h-[42px] items-center rounded-t-[9px] border-b border-[#dcdcdc] bg-white pl-[14px] pr-[13px] text-[#474747]">
        <button type="button" aria-label="Atgal" className="mr-5">
          <svg viewBox="0 0 12 12" className="size-[13px]" fill="none" stroke="currentColor" strokeWidth="1.500" aria-hidden="true"><path d="M6.500 0.800 1.300 6 6.500 11.200M1.300 6H12" /></svg>
        </button>
        <button type="button" aria-label="Pirmyn" className="mr-[21px] text-[#b0b0b0]">
          <svg viewBox="0 0 12 12" className="size-[13px]" fill="none" stroke="currentColor" strokeWidth="1.500" aria-hidden="true"><path d="M5.500 0.800 10.700 6 5.500 11.200M10.700 6H0" /></svg>
        </button>
        <button type="button" aria-label="Įkelti iš naujo" className="mr-[17px]">
          <svg viewBox="0 0 12 12" className="size-[13px]" fill="none" stroke="currentColor" strokeWidth="1.500" aria-hidden="true"><path d="M10.300 3.300A5 5 0 1 0 11 7M10.900 0.500V4H7.300" /></svg>
        </button>
        <div className="flex h-[31px] flex-1 items-center rounded-full bg-[#ebeef7] pl-[5px] pr-[13px]">
          <button type="button" aria-label="Svetainės informacija" className="grid size-[22px] place-items-center rounded-full bg-white text-[#1f1f1f]">
            <svg viewBox="0 0 14 14" className="size-[13px]" fill="none" stroke="currentColor" strokeWidth="1.400" aria-hidden="true"><circle cx="7" cy="7" r="6" /><path d="M7 6.300V10.300M7 3.700V5.100" /></svg>
          </button>
          <input type="text" aria-label="Adresas" defaultValue="192.168.0.1" className="ml-2 min-w-0 flex-1 bg-transparent text-[12px] leading-4 text-[#1f1f1f] outline-none" />
          <button type="button" aria-label="Pridėti žymę">
            <svg viewBox="0 0 16 16" className="size-[15px]" fill="none" stroke="currentColor" strokeWidth="1.500" aria-hidden="true"><path d="M8 1.500 9.900 6 14.800 6.400 11.100 9.600 12.200 14.300 8 11.800 3.800 14.300 4.900 9.600 1.200 6.400 6.100 6Z" /></svg>
          </button>
        </div>
        <button type="button" aria-label="Energijos taupymas" className="ml-[9px] grid size-[31px] place-items-center rounded-full bg-[#d0d9e8] text-[#0b57d0]">
          <svg viewBox="0 0 16 16" className="size-[15px]" fill="none" stroke="currentColor" strokeWidth="1.500" aria-hidden="true">
            <path d="M14.800 1.200C15 8 14 14.300 7.800 14.300A6.300 6.300 0 0 1 1.800 8C2 2.500 8 1 14.800 1.200ZM3.500 12.500 1.500 14.800" />
            <path d="M9 4.500 6 8H10.200L7 11.500" strokeWidth="1.300" />
          </svg>
        </button>
        <button type="button" aria-label="Profilis" className="ml-[9px] grid size-[18px] place-items-center rounded-full bg-[#512da8] text-[10px] leading-none text-white">G</button>
        <button type="button" aria-label="Meniu" className="ml-[17px] grid w-[14px] place-items-center">
          <svg viewBox="0 0 4 14" className="h-[14px] w-1" fill="currentColor" aria-hidden="true"><circle cx="2" cy="1.700" r="1.600" /><circle cx="2" cy="7" r="1.600" /><circle cx="2" cy="12.300" r="1.600" /></svg>
        </button>
      </div>
    </div>
    <SaverPopup />
    <main className="mx-auto w-full max-w-[548px] pt-[127px] text-[13px] leading-[18px] text-[#5f6368]">
      <DinoIcon className="h-[39px] w-10" />
      <h1 className="mt-6 text-[21px] leading-7 font-semibold text-[#202124]">Nėra interneto ryšio</h1>
      <p className="mt-[14px]">Pabandykite atlikti toliau nurodytus veiksmus.</p>
      <ul className="mt-[3px] list-disc pl-[37px] leading-[21px]">
        <li>Patikrinti tinklo laidus, modemą ir maršruto parinktuvą</li>
        <li>Iš naujo prisijungti prie „Wi-Fi“</li>
        <li><a href="#" className="text-[#1a73e8]">Paleistas įrankis „Windows Network Diagnostics“</a>.</li>
      </ul>
      <p className="mt-[14px] text-[11px]">ERR_INTERNET_DISCONNECTED</p>
    </main>
  </section>
);

export default function App() {
  return (
    <div className="grid min-h-screen grid-cols-[3fr_4fr] bg-black font-['Open_Sans','Noto_Sans',sans-serif]">
      <div className="min-w-0">
        <SettingsWindow />
        <Taskbar size="large" tray />
      </div>
      <div className="flex min-w-0 flex-col">
        <Browser />
        <Taskbar size="small" />
      </div>
    </div>
  );
}
